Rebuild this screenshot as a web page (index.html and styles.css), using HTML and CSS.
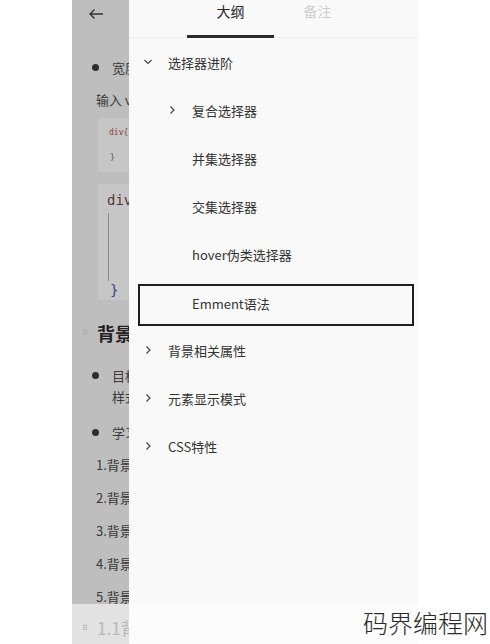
FILE: index.html
```html
<!DOCTYPE html>
<html lang="zh-CN">
<head>
  <meta charset="UTF-8">
  <title>大纲</title>
  <meta name="viewport" content="width=device-width, initial-scale=1.0">
  <link rel="stylesheet" href="styles.css">
</head>
<body>
  <div class="screen">
    <div class="main">
      <div class="page">
        <div class="page-top">
          <svg width="16" height="12" viewBox="0 0 16 12"><path d="M15 6H2M6.5 1.5 2 6l4.5 4.5" fill="none" stroke="#333" stroke-width="1.4"/></svg>
        </div>
        <div class="li li-1"><span class="dot"></span>宽度</div>
        <div class="para p-input">输入 v</div>
        <div class="code code-small">
          <div class="c-sel">div{</div>
          <div class="c-close">}</div>
        </div>
        <div class="code code-big">
          <div class="c-div">div</div>
          <div class="c-line"></div>
          <div class="c-brace">}</div>
        </div>
        <div class="heading"><span class="grip">⠿</span>背景</div>
        <div class="li li-2"><span class="dot"></span>目标</div>
        <div class="para p-style">样式</div>
        <div class="li li-3"><span class="dot"></span>学习</div>
        <div class="para num">1.背景</div>
        <div class="para num">2.背景</div>
        <div class="para num">3.背景</div>
        <div class="para num">4.背景</div>
        <div class="para num">5.背景</div>
      </div>

      <aside class="drawer">
        <div class="tabs">
          <div class="tab active">大纲</div>
          <div class="tab">备注</div>
        </div>
        <ul class="tree">
          <li class="node lv0"><svg class="chev" viewBox="0 0 12 12"><path d="M2.5 4 6 7.5 9.5 4" /></svg>选择器进阶</li>
          <li class="node lv1"><svg class="chev" viewBox="0 0 12 12"><path d="M4.5 2.5 8 6 4.5 9.5" /></svg>复合选择器</li>
          <li class="node lv1 leaf">并集选择器</li>
          <li class="node lv1 leaf">交集选择器</li>
          <li class="node lv1 leaf">hover伪类选择器</li>
          <li class="node lv1 leaf selected">Emment语法</li>
          <li class="node lv0"><svg class="chev" viewBox="0 0 12 12"><path d="M4.5 2.5 8 6 4.5 9.5" /></svg>背景相关属性</li>
          <li class="node lv0"><svg class="chev" viewBox="0 0 12 12"><path d="M4.5 2.5 8 6 4.5 9.5" /></svg>元素显示模式</li>
          <li class="node lv0"><svg class="chev" viewBox="0 0 12 12"><path d="M4.5 2.5 8 6 4.5 9.5" /></svg>CSS特性</li>
        </ul>
      </aside>
    </div>

    <div class="foot">
      <div class="page-rest"><span class="grip">⠿</span>1.1背景</div>
      <div class="drawer-rest"></div>
    </div>
  </div>

  <div class="watermark">码界编程网</div>
</body>
</html>
```

FILE: styles.css
```css
body {
  margin: 0;
  background: #fff;
  font-family: "Noto Sans CJK SC", "Noto Sans", sans-serif;
  color: #333;
  overflow: hidden;
}
.screen {
  width: 346px;
  height: 644px;
  margin-left: 72px;
  display: flex;
  flex-direction: column;
}
.main {
  height: 604px;
  display: flex;
}

/* dimmed document behind the drawer */
.page {
  width: 57px;
  flex-shrink: 0;
  background: #bebebe;
  overflow: hidden;
  white-space: nowrap;
  font-size: 13px;
  color: #3a3a3a;
}
.page-top {
  height: 38px;
  padding: 5px 0 0 16px;
  box-sizing: border-box;
}
.li, .para {
  height: 20px;
  line-height: 20px;
  display: flex;
  align-items: center;
}
.li { padding-left: 40px; position: relative; }
.para { padding-left: 24px; }
.dot {
  position: absolute;
  left: 20px;
  top: 6px;
  width: 7px;
  height: 7px;
  border-radius: 50%;
  background: #2e2e2e;
}
.li-1 { margin-top: 20px; }
.p-input { margin-top: 12px; }
.code {
  margin-left: 26px;
  background: #c6c6c6;
  font-family: "DejaVu Sans Mono", monospace;
}
.code-small {
  margin-top: 8px;
  height: 54px;
  padding: 9px 0 0 11px;
  box-sizing: border-box;
  font-size: 8px;
  line-height: 12px;
}
.c-sel { color: #8a3c3c; }
.c-close { margin-top: 13px; padding-left: 1px; color: #555; }
.code-big {
  margin-top: 12px;
  height: 116px;
  padding: 7px 0 0 9px;
  box-sizing: border-box;
  font-size: 14px;
  line-height: 18px;
}
.c-div { color: #5a3636; }
.c-line {
  width: 1px;
  height: 68px;
  margin: 4px 0 0 1px;
  background: #8a8a8a;
}
.c-brace { padding-left: 3px; color: #36438a; }
.heading {
  margin-top: 21px;
  height: 24px;
  line-height: 24px;
  font-size: 18px;
  font-weight: bold;
  color: #222;
  display: flex;
  align-items: center;
}
.grip {
  width: 25px;
  flex-shrink: 0;
  text-align: center;
  font-size: 8px;
  font-weight: normal;
  color: #a4a4a4;
}
.li-2 { margin-top: 21px; }
.p-style { margin-top: 1px; padding-left: 40px; }
.li-3 { margin-top: 16px; }
.num { margin-top: 13px; }
.li-3 + .num { margin-top: 12px; }

/* outline drawer */
.drawer {
  width: 289px;
  background: #f9f9f9;
}
.tabs {
  height: 38px;
  display: flex;
  padding-left: 58px;
  border-bottom: 1px solid #ededed;
  box-sizing: border-box;
}
.tab {
  width: 87px;
  height: 37px;
  box-sizing: border-box;
  text-align: center;
  line-height: 22px;
  font-size: 14px;
  color: #cfcfcf;
}
.tab.active {
  color: #2a2a2a;
  border-bottom: 3px solid #2a2a2a;
  height: 38px;
}
.tree {
  list-style: none;
  margin: 0;
  padding: 0;
}
.node {
  height: 48px;
  display: flex;
  align-items: center;
  font-size: 13px;
  color: #333;
  box-sizing: border-box;
}
.chev {
  width: 12px;
  height: 12px;
  margin-right: 14px;
  fill: none;
  stroke: #444;
  stroke-width: 1.2;
}
.lv0 { padding-left: 13px; }
.lv1 { padding-left: 37px; }
.lv1.leaf { padding-left: 63px; }
.node.selected {
  height: 42px;
  margin: 6px 4px 0 9px;
  border: 2px solid #1e1e1e;
  padding: 0 0 3px 52px;
}

.foot {
  height: 40px;
  display: flex;
}
.page-rest {
  width: 57px;
  flex-shrink: 0;
  background: #e2e2e2;
  overflow: hidden;
  white-space: nowrap;
  display: flex;
  align-items: center;
  padding-top: 6px;
  box-sizing: border-box;
  font-size: 17px;
  color: #b8b8b8;
}
.drawer-rest {
  flex: 1;
  background: #fcfcfc;
}
.watermark {
  position: absolute;
  right: 2px;
  bottom: 4px;
  font-size: 25px;
  font-weight: 300;
  color: #2a2a2a;
}
```
